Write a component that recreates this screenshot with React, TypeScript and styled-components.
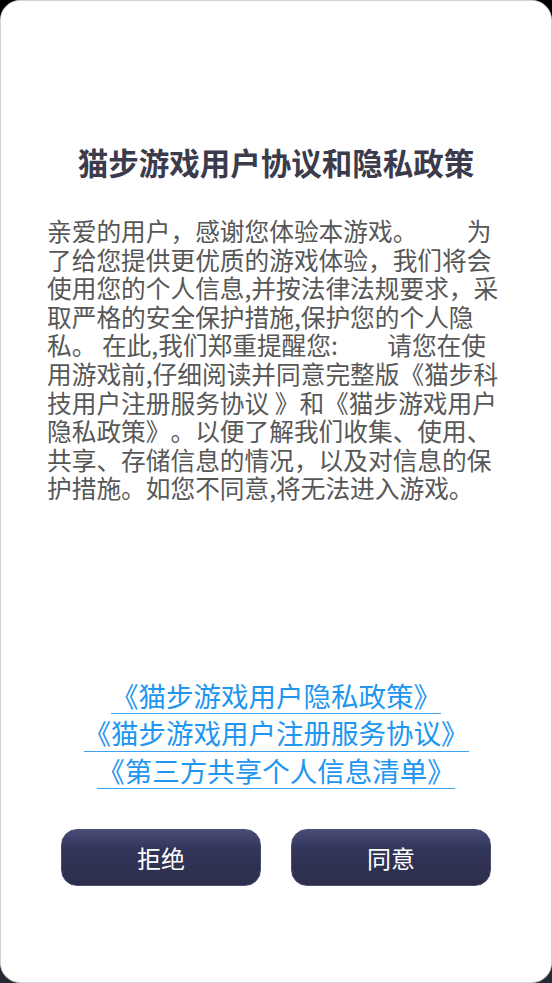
import React from 'react';
import styled, { createGlobalStyle } from 'styled-components';

const GlobalStyle = createGlobalStyle`
  html, body {
    margin: 0;
    padding: 0;
    height: 100%;
  }
  body {
    background: linear-gradient(180deg, #000000 0%, #14161b 50%, #262a33 100%);
    font-family: "Noto Sans CJK SC", "Noto Sans", sans-serif;
    text-spacing-trim: space-all;
  }
`;

const Card = styled.main`
  box-sizing: border-box;
  width: 552px;
  height: 983px;
  background: #ffffff;
  border: 1px solid #d2d2d2;
  border-radius: 20px;
  display: flex;
  flex-direction: column;
  align-items: center;
  overflow: hidden;
`;

const Title = styled.h1`
  margin: 141px 0 0;
  font-size: 30.5px;
  line-height: 40px;
  font-weight: 700;
  color: #3b3b4c;
`;

const Body = styled.div`
  align-self: stretch;
  margin: 34px 0 0;
  padding: 0 46px;
  font-size: 24.7px;
  line-height: 28.6px;
  color: #575757;
`;

const Line = styled.span`
  display: block;
  white-space: pre;
  text-spacing-trim: space-all;
`;

const Links = styled.nav`
  margin-top: 175px;
  display: flex;
  flex-direction: column;
  align-items: center;
`;

const DocLink = styled.a`
  display: inline-block;
  font-size: 27.5px;
  line-height: 36.5px;
  color: #2196f0;
  text-decoration: none;
  border-bottom: 1px solid #3ba2f2;
  text-spacing-trim: space-all;
`;

const Actions = styled.div`
  margin-top: 40px;
  display: flex;
  gap: 30px;
`;

const Button = styled.button`
  width: 200px;
  height: 57px;
  border-radius: 16px;
  border: 1px solid #4a4f74;
  background: linear-gradient(180deg, #474c75 0%, #32355a 35%, #2b2e4a 100%);
  color: #ffffff;
  font-family: "Noto Sans CJK SC", sans-serif;
  font-size: 24px;
  cursor: pointer;
  padding: 0;
`;

const paragraph = [
  '亲爱的用户，感谢您体验本游戏。　　为',
  '了给您提供更优质的游戏体验，我们将会',
  '使用您的个人信息,并按法律法规要求，采',
  '取严格的安全保护措施,保护您的个人隐',
  '私。 在此,我们郑重提醒您:　　请您在使',
  '用游戏前,仔细阅读并同意完整版《猫步科',
  '技用户注册服务协议 》和《猫步游戏用户',
  '隐私政策》。以便了解我们收集、使用、',
  '共享、存储信息的情况，以及对信息的保',
  '护措施。如您不同意,将无法进入游戏。',
];

const docs = [
  '《猫步游戏用户隐私政策》',
  '《猫步游戏用户注册服务协议》',
  '《第三方共享个人信息清单》',
];

const App: React.FC = () => {
  return (
    <>
      <GlobalStyle />
      <Card>
        <Title>猫步游戏用户协议和隐私政策</Title>
        <Body>
          {paragraph.map((text, i) => (
            <Line key={i}>{text}</Line>
          ))}
        </Body>
        <Links>
          {docs.map((doc) => (
            <DocLink key={doc} href="#">
              {doc}
            </DocLink>
          ))}
        </Links>
        <Actions>
          <Button>拒绝</Button>
          <Button>同意</Button>
        </Actions>
      </Card>
    </>
  );
};

export default App;
